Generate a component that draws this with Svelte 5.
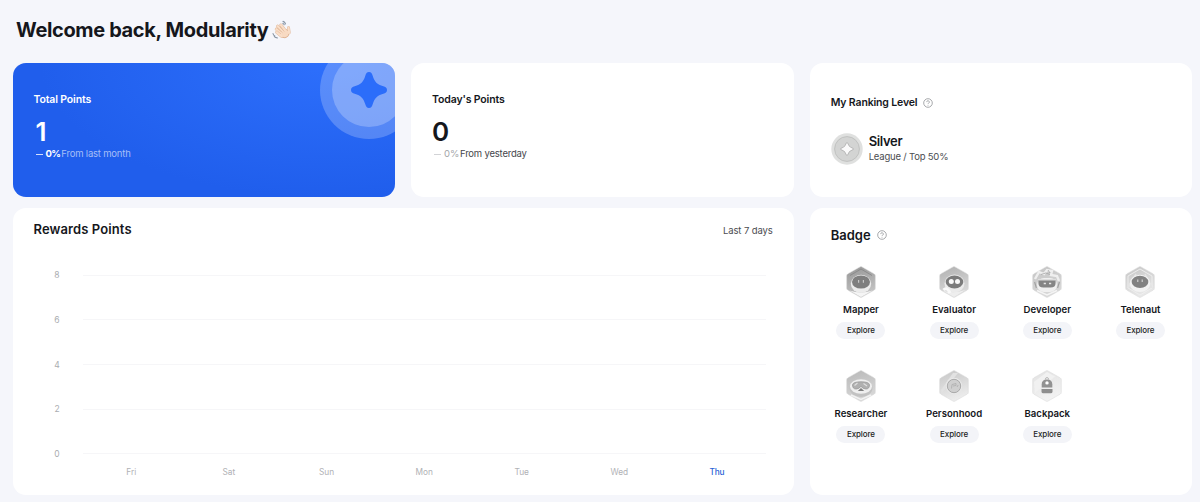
<script>
  const stats = [
    { label: 'Total Points', value: '1', change: '0%', note: 'From last month', primary: true },
    { label: "Today's Points", value: '0', change: '0%', note: 'From yesterday', primary: false },
  ];

  const ticks = [8, 6, 4, 2, 0];
  const days = ['Fri', 'Sat', 'Sun', 'Mon', 'Tue', 'Wed', 'Thu'];
  const today = 'Thu';

  const badges = [
    { name: 'Mapper', art: 'mapper', from: '#949494', to: '#c4c4c4' },
    { name: 'Evaluator', art: 'evaluator', from: '#b0b0b0', to: '#dadada' },
    { name: 'Developer', art: 'developer', from: '#c4c4c4', to: '#d8d8d8' },
    { name: 'Telenaut', art: 'telenaut', from: '#c6c6c6', to: '#e8e8e8' },
    { name: 'Researcher', art: 'researcher', from: '#b8b8b8', to: '#d8d8d8' },
    { name: 'Personhood', art: 'personhood', from: '#c6c6c6', to: '#ececec' },
    { name: 'Backpack', art: 'backpack', from: '#e2e2e2', to: '#f2f2f2' },
  ];
</script>

{#snippet help()}
  <svg class="help" viewBox="0 0 10 10" fill="none" stroke="#8b8d92" stroke-width="0.75">
    <circle cx="5" cy="5" r="4.3" />
    <path d="M3.7 4.1a1.3 1.3 0 1 1 1.9 1.1c-.4.25-.6.4-.6.85M5 6.9v.7" />
  </svg>
{/snippet}

{#snippet hexagon(badge)}
  <svg class="hex" viewBox="0 0 30 32">
    <defs>
      <linearGradient id="hex-{badge.art}" x1="0" y1="0" x2="0.3" y2="1">
        <stop offset="0" stop-color={badge.from} />
        <stop offset="1" stop-color={badge.to} />
      </linearGradient>
    </defs>
    <path
      d="M14 .9Q15 .3 16 .9L28.300 7.900Q29.300 8.500 29.300 9.700V22.300Q29.300 23.500 28.300 24.100L16 31.100Q15 31.700 14 31.100L1.700 24.100Q.7 23.500 .7 22.300V9.700Q.7 8.500 1.700 7.900Z"
      fill="url(#hex-{badge.art})"
      stroke="#d6d6d6"
      stroke-width="0.5"
    />
    {#if badge.art === 'mapper'}
      <path d="M3.500 24.500Q15 28.500 26.500 24.500L15 31Z" fill="#f5f5f5" />
      <path d="M4 9.500L15 3l11 6.500" fill="none" stroke="#888" stroke-width="0.9" />
      <ellipse cx="15" cy="17.800" rx="10.200" ry="9" fill="#ececec" />
      <ellipse cx="15" cy="16" rx="9" ry="6.600" fill="#7e7e7e" />
      <path d="M12.600 14v2.800M17.400 14v2.800" stroke="#c6c6c6" stroke-width="1.200" />
    {:else if badge.art === 'evaluator'}
      <path d="M3.500 24.500Q15 28 26.500 24L15 31Z" fill="#eee" />
      <ellipse cx="15.500" cy="17.500" rx="10" ry="9" fill="#ebebeb" />
      <ellipse cx="15.500" cy="16" rx="8.800" ry="6.500" fill="#7b7b7b" />
      <circle cx="12.300" cy="15.600" r="2.500" fill="#f8f8f8" />
      <circle cx="18.500" cy="15.600" r="2.500" fill="#f8f8f8" />
      <path d="M4.600 24q2.400-2.800 5 .6l1.400 2.400" fill="none" stroke="#f9f9f9" stroke-width="3" />
    {:else if badge.art === 'developer'}
      <path d="M3 13L7 6l5 2 3-4 5 1-1 4 6 1 2 5" fill="none" stroke="#efefef" stroke-width="2.400" />
      <path d="M9 8.500q5-3 9 0M16 4l2 3" fill="none" stroke="#a6a6a6" stroke-width="0.8" />
      <rect x="5" y="12" width="20" height="14" rx="7" fill="#f0f0f0" />
      <path d="M6.400 14.300h17.200v2.700q0 4.600-5 4.600h-7.200q-5 0-5-4.600z" fill="#858585" />
      <path d="M6 13.600h18" stroke="#dedede" stroke-width="1.400" />
      <path d="M11.700 17.500h2.200M17 17.500h2.200" stroke="#e8e8e8" stroke-width="1.500" />
      <path d="M2.600 16l1.800 6M27.400 16l-1.800 6" stroke="#a2a2a2" stroke-width="1.200" />
      <path d="M5 24.500L15 29l10-4.500" fill="none" stroke="#f4f4f4" stroke-width="1.500" />
    {:else if badge.art === 'telenaut'}
      <path d="M3 10l12-7 12 7v12l-12 7-12-7z" fill="none" stroke="#efefef" stroke-width="0.9" />
      <path d="M3 22L11 8M27 22L20 8" stroke="#e4e4e4" stroke-width="1.600" />
      <ellipse cx="15" cy="17.400" rx="10.300" ry="8.700" fill="#f3f3f3" />
      <ellipse cx="15" cy="15.900" rx="8.300" ry="6.200" fill="#828282" />
      <path d="M12.800 13.600v2.400M17.200 13.600v2.400" stroke="#d7d7d7" stroke-width="1.100" />
    {:else if badge.art === 'researcher'}
      <ellipse cx="15" cy="18" rx="11.500" ry="9" fill="#c2c2c2" />
      <ellipse cx="15" cy="16.500" rx="11" ry="7.300" fill="#efefef" />
      <path d="M6.500 14.800q.5-3 8.500-3t8.500 3q0 4.200-3.600 4.200-2.700 0-4.900-2.600-2.200 2.600-4.900 2.600-3.600 0-3.600-4.200z" fill="#b0b0b0" stroke="#999" stroke-width="0.8" />
      <path d="M8.500 15.500l3-2.500M17.500 13.500l3.500 2.500" fill="none" stroke="#dedede" stroke-width="1.200" />
      <path d="M11.800 21l3.200-3 3.200 3z" fill="#808080" />
      <path d="M5 25L15 29.500 25 25" fill="none" stroke="#f2f2f2" stroke-width="1.500" />
    {:else if badge.art === 'personhood'}
      <path d="M2 20L14 3h5L3 23z" fill="#e2e2e2" />
      <circle cx="15" cy="16" r="8.200" fill="#e9e9e9" />
      <circle cx="15" cy="16" r="6.700" fill="#cfcfcf" stroke="#a3a3a3" stroke-width="0.9" />
      <path d="M12.500 18.500l.5-4 4-1v2l-3 .5M18 17l1.200-2" fill="none" stroke="#b0b0b0" stroke-width="0.9" />
    {:else}
      <path d="M2 12L15 2l8 4.500L3 23z" fill="#f1f1f1" />
      <path d="M13.400 9.500q0-2 1.600-2t1.600 2" fill="none" stroke="#b8b8b8" stroke-width="1" />
      <path d="M9.700 17.500v-3.200q0-4.800 5.300-4.800t5.300 4.800v3.200z" fill="#929292" />
      <circle cx="15" cy="12.900" r="1.700" fill="#fff" />
      <path d="M9.500 19h11v2.800q0 1.400-1.400 1.400h-8.200q-1.400 0-1.400-1.400z" fill="#8e8e8e" />
    {/if}
  </svg>
{/snippet}

<main class="dashboard">
  <h1>
    <span>Welcome back, Modularity</span>
    <svg class="wave" viewBox="0 0 20 20">
      <g stroke-linecap="round" stroke-linejoin="round" fill="none">
        <g stroke="#dfb494" stroke-width="3">
          <path d="M4.700 12.300l5 4M4.300 9.200l6.500 5.500M5.600 6.200l6.500 6.500M8.900 5l5 6.500" />
          <path d="M16.500 7.800l.6 5" />
        </g>
        <path d="M8 12.500L14 9.500Q17 10.500 17.300 13.200Q16.500 17.300 13 17.800Q10.500 17.800 8.700 16Z" fill="#f8dac2" stroke="#dfb494" stroke-width="1" />
        <g stroke="#f9dec8" stroke-width="2.200">
          <path d="M4.700 12.300l5 4M4.300 9.200l6.500 5.500M5.600 6.200l6.500 6.500M8.900 5l5 6.500" />
          <path d="M16.500 7.800l.6 5" />
        </g>
        <path d="M10 12.800L14 11l2.500 2-1.500 3-2.500.7-2.500-1z" fill="#f8dac2" />
        <path d="M5.500 11.100l3.300 2.700M6 8.500l4.300 4M8.300 6.700l3.800 4.700" stroke="#dfb494" stroke-width="0.6" />
        <path d="M11 1.400q1.900.5 2.500 2.500M10.900 3.400q.9.300 1.300 1.300M1 13.500q.3 1.700 1.800 2.500M2.300 16.600q1.200 1.300 3 1.300" stroke="#8794a3" stroke-width="1.100" />
      </g>
    </svg>
  </h1>

  <div class="grid">
    {#each stats as stat}
      <section class="card stat" class:primary={stat.primary}>
        {#if stat.primary}
          <svg class="medal" viewBox="0 0 98 98">
            <circle cx="49" cy="49" r="49" fill="#fff" fill-opacity="0.22" />
            <circle cx="49" cy="49" r="37" fill="#fff" fill-opacity="0.24" />
            <path
              d="M49 31C51.200 31 52 32.500 52.700 34.700C54.600 41 57 43.400 63.300 45.300C65.500 46 67 46.800 67 49S65.500 52 63.300 52.700C57 54.600 54.600 57 52.700 63.300C52 65.500 51.200 67 49 67S46 65.500 45.300 63.300C43.400 57 41 54.600 34.700 52.700C32.500 52 31 51.200 31 49S32.500 46 34.700 45.300C41 43.400 43.400 41 45.300 34.700C46 32.500 46.800 31 49 31Z"
              fill="#2b6dfa"
            />
          </svg>
        {/if}
        <h2 class="label">{stat.label}</h2>
        <div class="value">{stat.value}</div>
        <p class="change">
          <i class="dash"></i>
          <span class="percent">{stat.change}</span>
          <span class="note">{stat.note}</span>
        </p>
      </section>
    {/each}

    <section class="card ranking">
      <div class="heading">
        <h2 class="label">My Ranking Level</h2>
        {@render help()}
      </div>
      <div class="league">
        <svg class="coin" viewBox="0 0 32 32">
          <circle cx="16" cy="16" r="15.700" fill="#dfe0df" />
          <circle cx="16" cy="16" r="12.400" fill="#d3d4d3" stroke="#bdbebd" stroke-width="0.9" />
          <path
            d="M16 9.500Q16.700 9.500 17 10.800Q17.900 14.100 21.200 15Q22.500 15.300 22.500 16T21.200 17Q17.900 17.900 17 21.200Q16.700 22.500 16 22.500T15 21.200Q14.100 17.900 10.800 17Q9.500 16.700 9.500 16T10.800 15Q14.100 14.100 15 10.800Q15.300 9.500 16 9.500Z"
            fill="#fafafa"
            stroke="#a9a9a9"
            stroke-width="0.8"
          />
        </svg>
        <div>
          <div class="tier">Silver</div>
          <div class="tier-note">League / Top 50%</div>
        </div>
      </div>
    </section>

    <section class="card rewards">
      <header>
        <h2 class="title">Rewards Points</h2>
        <span class="range">Last 7 days</span>
      </header>
      <div class="chart">
        {#each ticks as tick}
          <div class="tick">
            <span>{tick}</span>
            <i></i>
          </div>
        {/each}
      </div>
      <div class="days">
        {#each days as day}
          <span class:active={day === today}>{day}</span>
        {/each}
      </div>
    </section>

    <section class="card badges">
      <div class="heading">
        <h2 class="title">Badge</h2>
        {@render help()}
      </div>
      <div class="badge-grid">
        {#each badges as badge}
          <div class="badge">
            {@render hexagon(badge)}
            <span class="badge-name">{badge.name}</span>
            <button>Explore</button>
          </div>
        {/each}
      </div>
    </section>
  </div>
</main>

<style>
  :global(body) {
    margin: 0;
    background: #f5f6fb;
  }

  .dashboard {
    box-sizing: border-box;
    height: 502px;
    overflow: hidden;
    padding: 16px 7.700px 0 12.500px;
    font-family: Inter, 'Liberation Sans', sans-serif;
    color: #15171c;
  }

  h1,
  h2,
  p {
    margin: 0;
  }

  h1 {
    display: flex;
    align-items: center;
    gap: 4px;
    height: 28px;
    padding-left: 3.500px;
    margin-bottom: 19.300px;
    font-size: 20px;
    font-weight: 700;
    letter-spacing: -0.36px;
    white-space: nowrap;
  }

  .wave {
    width: 20px;
    height: 20px;
  }

  .grid {
    display: grid;
    grid-template-columns: repeat(3, minmax(0, 1fr));
    grid-template-rows: 134.200px 287px;
    gap: 10.500px 16px;
  }

  .card {
    position: relative;
    box-sizing: border-box;
    overflow: hidden;
    border-radius: 13px;
    background: #fff;
  }

  .stat {
    padding: 28.700px 21px 0;
  }

  .primary {
    color: #fff;
    background: radial-gradient(ellipse 75% 100% at 82% 0, #2d6ffc 0%, #205eec 100%);
  }

  .medal {
    position: absolute;
    top: -22.500px;
    right: -22.500px;
    width: 98px;
    height: 98px;
  }

  .label {
    font-size: 10.500px;
    font-weight: 600;
    line-height: 16px;
    letter-spacing: -0.15px;
  }

  .value {
    height: 32px;
    margin-top: 8.300px;
    font-size: 26px;
    font-weight: 600;
    line-height: 32px;
  }

  .primary .value {
    padding-left: 2px;
  }

  .change {
    display: flex;
    align-items: center;
    height: 12px;
    padding-left: 2px;
    font-size: 9.500px;
    line-height: 12px;
    letter-spacing: -0.2px;
    white-space: nowrap;
  }

  .dash {
    width: 7px;
    height: 1px;
    margin-right: 3px;
    background: #d2d3d6;
  }

  .percent {
    margin-right: 1px;
    color: #a4a6aa;
  }

  .note {
    color: #45474c;
  }

  .primary .dash {
    background: #d3dffc;
  }

  .primary .percent {
    color: #fff;
    font-weight: 700;
    letter-spacing: -0.6px;
  }

  .primary .note {
    color: #a6bff7;
    letter-spacing: -0.2px;
  }

  .heading {
    display: flex;
    align-items: center;
  }

  .help {
    width: 10px;
    height: 10px;
  }

  .ranking {
    padding: 31.700px 21px 0;
  }

  .ranking .heading {
    gap: 6px;
  }

  .league {
    display: flex;
    align-items: center;
    gap: 6px;
    margin-top: 22px;
  }

  .coin {
    width: 32px;
    height: 32px;
  }

  .tier {
    font-size: 13px;
    font-weight: 600;
    line-height: 15px;
    letter-spacing: -0.35px;
  }

  .tier-note {
    font-size: 9.500px;
    line-height: 15px;
    letter-spacing: -0.2px;
    color: #4b4d51;
  }

  .rewards {
    grid-column: span 2;
    padding: 11px 21px 0;
  }

  .rewards header {
    display: flex;
    justify-content: space-between;
    align-items: center;
    height: 20px;
  }

  .title {
    font-size: 13px;
    font-weight: 600;
    line-height: 20px;
    letter-spacing: 0.1px;
  }

  .badges .title {
    letter-spacing: 0;
  }

  .range {
    padding-top: 3.500px;
    font-size: 9.500px;
    letter-spacing: -0.1px;
    color: #4b4d51;
  }

  .chart {
    margin: 14px 7px 0 17px;
  }

  .tick {
    display: flex;
    align-items: center;
    height: 44.650px;
    font-size: 8.500px;
    color: #aaacb0;
  }

  .tick span {
    width: 13px;
    text-align: center;
  }

  .tick i {
    flex: 1;
    height: 1px;
    margin-left: 19.500px;
    background: #f6f6f8;
  }

  .days {
    display: grid;
    grid-template-columns: repeat(7, 1fr);
    margin: -10px 7px 0 49px;
    font-size: 8.300px;
    line-height: 12px;
    text-align: center;
    color: #b0b1b5;
  }

  .days .active {
    color: #2a5fd6;
    font-weight: 500;
    letter-spacing: -0.2px;
  }

  .badges {
    padding: 17px 5.300px 0 4.700px;
  }

  .badges .heading {
    gap: 6px;
    padding-left: 16.300px;
  }

  .badge-grid {
    display: grid;
    grid-template-columns: repeat(4, 1fr);
    grid-auto-rows: 104px;
    margin-top: 21.300px;
  }

  .badge {
    display: flex;
    flex-direction: column;
    align-items: center;
  }

  .hex {
    width: 30px;
    height: 32px;
  }

  .badge-name {
    margin-top: 4.500px;
    font-size: 9.600px;
    font-weight: 600;
    line-height: 14px;
  }

  button {
    width: 49px;
    height: 17px;
    margin-top: 5.300px;
    padding: 0;
    border: 0;
    border-radius: 9px;
    background: #f3f4f8;
    color: #1d1f24;
    font-family: inherit;
    font-size: 8px;
    font-weight: 500;
    line-height: 17px;
    letter-spacing: -0.1px;
  }
</style>
